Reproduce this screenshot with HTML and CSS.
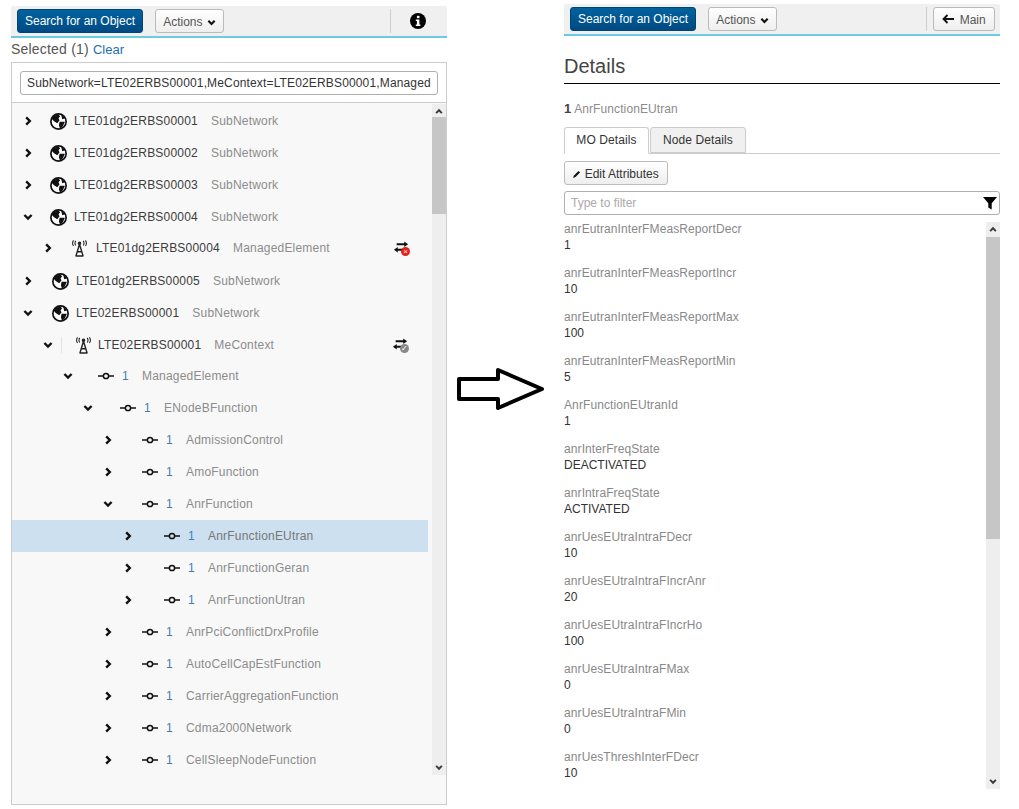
FILE: index.html
```html
<!DOCTYPE html>
<html lang="en">
<head>
    <meta charset="UTF-8">
    <title>Topology Browser</title>
    <link rel="stylesheet" href="styles.css">
</head>
<body>
    <svg class="sprites" width="0" height="0">
        <symbol id="globe" viewBox="0 0 16 16">
            <circle cx="8" cy="8" r="7.2" fill="#fff" stroke="#111" stroke-width="1.6"/>
            <path fill="#111" d="M3 3 7.5 1 9.5 3 8 5.2 9 6.8 6.8 9.6 3.5 7.5 1.5 5.5ZM9 8.2 14 8.2 12 12.8 9.5 15 8.4 11.5ZM10.5 1.5 14.5 5 11.5 5.8Z"/>
        </symbol>
        <symbol id="tower" viewBox="0 0 16 16" fill="none" stroke="#222">
            <circle cx="8" cy="3" r="1.2" fill="#222"/>
            <path stroke-width="1.3" d="M8 4 4.5 15.5M8 4 11.5 15.5M6 11H10M5 15H11"/>
            <path d="M4.5 .8Q3 3 4.5 5.2M11.5 .8Q13 3 11.5 5.2M2.4 .4Q.6 3 2.4 5.6M13.6 .4Q15.4 3 13.6 5.6"/>
        </symbol>
        <symbol id="node" viewBox="0 0 16 8" fill="none" stroke="#111" stroke-width="1.5">
            <circle cx="8" cy="4" r="2.6"/>
            <path d="M0 4H5.4M10.6 4H16"/>
        </symbol>
        <symbol id="right" viewBox="0 0 8 10">
            <path d="M2.2 1.4 5.8 5 2.2 8.6" fill="none" stroke="#111" stroke-width="2.4"/>
        </symbol>
        <symbol id="down" viewBox="0 0 10 8">
            <path d="M1.4 2 5 5.6 8.6 2" fill="none" stroke="#111" stroke-width="2.4"/>
        </symbol>
        <symbol id="sync" viewBox="0 0 14 11">
            <path fill="#111" d="M3 2H10V.5L13.5 3 10 5.5V4H3ZM10.5 7H4V5.5L.5 8 4 10.5V9H10.5Z"/>
        </symbol>
    </svg>

    <div class="page">
        <section class="pane">
            <div class="toolbar">
                <button class="btn primary">Search for an Object</button>
                <button class="btn actions">Actions <svg class="caret"><use href="#down"/></svg></button>
                <span class="toolbar-sep sep-info"></span>
                <svg class="info-icon" viewBox="0 0 16 16">
                    <circle cx="8" cy="8" r="8" fill="#000"/>
                    <rect x="6.9" y="2.8" width="2.6" height="2.4" fill="#fff"/>
                    <path fill="#fff" d="M5.8 6.4H9.4V11.4H10.4V13H5.8V11.4H6.9V8H5.8Z"/>
                </svg>
            </div>
            <div class="selected">Selected (1) <a class="clear">Clear</a></div>
            <div class="tree-box">
                <div class="path-bar">
                    <input class="path-input" value="SubNetwork=LTE02ERBS00001,MeContext=LTE02ERBS00001,ManagedElement=1,ENodeBFunction=1">
                </div>
                <div class="tree-wrap">
                    <div class="tree">
                        <div class="row top"><svg class="chev"><use href="#right"/></svg><svg class="ico globe"><use href="#globe"/></svg><span class="name">LTE01dg2ERBS00001</span><span class="type">SubNetwork</span></div>
                        <div class="row top"><svg class="chev"><use href="#right"/></svg><svg class="ico globe"><use href="#globe"/></svg><span class="name">LTE01dg2ERBS00002</span><span class="type">SubNetwork</span></div>
                        <div class="row top"><svg class="chev"><use href="#right"/></svg><svg class="ico globe"><use href="#globe"/></svg><span class="name">LTE01dg2ERBS00003</span><span class="type">SubNetwork</span></div>
                        <div class="row top"><svg class="chev"><use href="#down"/></svg><svg class="ico globe"><use href="#globe"/></svg><span class="name">LTE01dg2ERBS00004</span><span class="type">SubNetwork</span></div>
                        <div class="row lvl-1"><svg class="chev"><use href="#right"/></svg><svg class="ico tower"><use href="#tower"/></svg><span class="name">LTE01dg2ERBS00004</span><span class="type">ManagedElement</span>
                            <span class="sync"><svg class="sync-arrows"><use href="#sync"/></svg><span class="dot dot-red">×</span></span></div>
                        <div class="row top wide"><svg class="chev"><use href="#right"/></svg><svg class="ico globe"><use href="#globe"/></svg><span class="name">LTE01dg2ERBS00005</span><span class="type">SubNetwork</span></div>
                        <div class="row top wide"><svg class="chev"><use href="#down"/></svg><svg class="ico globe"><use href="#globe"/></svg><span class="name">LTE02ERBS00001</span><span class="type">SubNetwork</span></div>
                        <div class="row top lvl-1 wide"><svg class="chev"><use href="#down"/></svg><span class="tick"></span><svg class="ico tower"><use href="#tower"/></svg><span class="name">LTE02ERBS00001</span><span class="type">MeContext</span>
                            <span class="sync"><svg class="sync-arrows"><use href="#sync"/></svg><span class="dot dot-grey">✓</span></span></div>
                        <div class="row mo lvl-2"><svg class="chev"><use href="#down"/></svg><svg class="ico conn"><use href="#node"/></svg><span class="num">1</span><span class="type">ManagedElement</span></div>
                        <div class="row mo lvl-3"><svg class="chev"><use href="#down"/></svg><svg class="ico conn"><use href="#node"/></svg><span class="num">1</span><span class="type">ENodeBFunction</span></div>
                        <div class="row mo lvl-4"><svg class="chev"><use href="#right"/></svg><svg class="ico conn"><use href="#node"/></svg><span class="num">1</span><span class="type">AdmissionControl</span></div>
                        <div class="row mo lvl-4"><svg class="chev"><use href="#right"/></svg><svg class="ico conn"><use href="#node"/></svg><span class="num">1</span><span class="type">AmoFunction</span></div>
                        <div class="row mo lvl-4"><svg class="chev"><use href="#down"/></svg><svg class="ico conn"><use href="#node"/></svg><span class="num">1</span><span class="type">AnrFunction</span></div>
                        <div class="row mo lvl-5 active"><svg class="chev"><use href="#right"/></svg><svg class="ico conn"><use href="#node"/></svg><span class="num">1</span><span class="type">AnrFunctionEUtran</span></div>
                        <div class="row mo lvl-5"><svg class="chev"><use href="#right"/></svg><svg class="ico conn"><use href="#node"/></svg><span class="num">1</span><span class="type">AnrFunctionGeran</span></div>
                        <div class="row mo lvl-5"><svg class="chev"><use href="#right"/></svg><svg class="ico conn"><use href="#node"/></svg><span class="num">1</span><span class="type">AnrFunctionUtran</span></div>
                        <div class="row mo lvl-4"><svg class="chev"><use href="#right"/></svg><svg class="ico conn"><use href="#node"/></svg><span class="num">1</span><span class="type">AnrPciConflictDrxProfile</span></div>
                        <div class="row mo lvl-4"><svg class="chev"><use href="#right"/></svg><svg class="ico conn"><use href="#node"/></svg><span class="num">1</span><span class="type">AutoCellCapEstFunction</span></div>
                        <div class="row mo lvl-4"><svg class="chev"><use href="#right"/></svg><svg class="ico conn"><use href="#node"/></svg><span class="num">1</span><span class="type">CarrierAggregationFunction</span></div>
                        <div class="row mo lvl-4"><svg class="chev"><use href="#right"/></svg><svg class="ico conn"><use href="#node"/></svg><span class="num">1</span><span class="type">Cdma2000Network</span></div>
                        <div class="row mo lvl-4"><svg class="chev"><use href="#right"/></svg><svg class="ico conn"><use href="#node"/></svg><span class="num">1</span><span class="type">CellSleepNodeFunction</span></div>
                    </div>
                    <div class="scrollbar tree-scroll">
                        <svg class="sb-up"><use href="#down"/></svg>
                        <div class="thumb tree-thumb"></div>
                        <svg class="sb-down"><use href="#down"/></svg>
                    </div>
                </div>
            </div>
        </section>

        <svg class="big-arrow" viewBox="0 0 88 42">
            <path d="M2 11H41V2L85 21 41 40V31H2Z" fill="#fff" stroke="#000" stroke-width="4" stroke-linejoin="round"/>
        </svg>

        <section class="pane details-pane">
            <div class="toolbar">
                <button class="btn primary">Search for an Object</button>
                <button class="btn actions">Actions <svg class="caret"><use href="#down"/></svg></button>
                <span class="toolbar-sep sep-main"></span>
                <button class="btn main-btn">
                    <svg class="back" viewBox="0 0 12 10"><path d="M5.5 1 1.5 5 5.5 9M2 5H12" fill="none" stroke="#111" stroke-width="1.8"/></svg>
                    Main
                </button>
            </div>
            <h1 class="title">Details</h1>
            <div class="subject"><span class="count">1</span> <span class="type">AnrFunctionEUtran</span></div>
            <div class="tabs">
                <div class="tab on">MO Details</div>
                <div class="tab">Node Details</div>
            </div>
            <button class="btn edit-btn">
                <svg class="pencil" viewBox="0 0 8 8"><path d="M0 8 1 5.5 5.5 1 7 2.5 2.5 7Z" fill="#111"/></svg>
                Edit Attributes
            </button>
            <div class="filter">
                <span class="placeholder">Type to filter</span>
                <svg class="funnel" viewBox="0 0 14 14"><path d="M0 1H14L8.7 7.2V13.5L5.3 11.5V7.2Z" fill="#000"/></svg>
            </div>
            <div class="attrs-wrap">
                <dl class="attrs">
                    <dt>anrEutranInterFMeasReportDecr</dt><dd>1</dd>
                    <dt>anrEutranInterFMeasReportIncr</dt><dd>10</dd>
                    <dt>anrEutranInterFMeasReportMax</dt><dd>100</dd>
                    <dt>anrEutranInterFMeasReportMin</dt><dd>5</dd>
                    <dt>AnrFunctionEUtranId</dt><dd>1</dd>
                    <dt>anrInterFreqState</dt><dd>DEACTIVATED</dd>
                    <dt>anrIntraFreqState</dt><dd>ACTIVATED</dd>
                    <dt>anrUesEUtraIntraFDecr</dt><dd>10</dd>
                    <dt>anrUesEUtraIntraFIncrAnr</dt><dd>20</dd>
                    <dt>anrUesEUtraIntraFIncrHo</dt><dd>100</dd>
                    <dt>anrUesEUtraIntraFMax</dt><dd>0</dd>
                    <dt>anrUesEUtraIntraFMin</dt><dd>0</dd>
                    <dt>anrUesThreshInterFDecr</dt><dd>10</dd>
                </dl>
                <div class="scrollbar attrs-scroll">
                    <svg class="sb-up"><use href="#down"/></svg>
                    <div class="thumb attrs-thumb"></div>
                    <svg class="sb-down"><use href="#down"/></svg>
                </div>
            </div>
        </section>
    </div>
</body>
</html>
```

FILE: styles.css
```css
html, body {
    margin: 0;
    height: 809px;
    overflow: hidden;
    background-color: #fff;
}

body {
    font-family: "Liberation Sans", Arial, sans-serif;
    font-size: 12px;
    color: #333;
}

.sprites {
    display: block;
    height: 0;
}

.page {
    display: flex;
    align-items: flex-start;
    padding-left: 11px;
}

.pane {
    width: 436px;
    margin-top: 6px;
    flex: none;
}

.details-pane {
    margin-top: 4px;
    margin-left: 19px;
}

.big-arrow {
    width: 88px;
    height: 42px;
    margin: 368px 0 0 10px;
    flex: none;
}

/* toolbar */
.toolbar {
    display: flex;
    align-items: center;
    height: 30px;
    padding-left: 6px;
    background-color: #f0f0f0;
    border-bottom: 2px solid #6ccbe4;
    border-radius: 2px 2px 0 0;
}

.btn {
    height: 24px;
    padding: 0;
    border: 1px solid #bbb;
    border-radius: 3px;
    background: linear-gradient(#fff, #eee);
    font-family: inherit;
    font-size: 12px;
    color: #555;
    cursor: pointer;
}

.primary {
    width: 126px;
    border-color: #00457a;
    background: linear-gradient(#00629f, #004a82);
    color: #fff;
}

.actions {
    width: 69px;
    margin-left: 12px;
    padding-top: 2px;
}

.caret {
    width: 9px;
    height: 7px;
    margin-left: 1px;
}

.toolbar-sep {
    width: 1px;
    height: 24px;
    background-color: #ccc;
}

.sep-info {
    margin-left: 166px;
}

.sep-main {
    margin-left: 149px;
}

.info-icon {
    width: 16px;
    height: 16px;
    margin-left: 19px;
}

.main-btn {
    width: 62px;
    margin-left: 6px;
    padding-top: 2px;
}

.back {
    width: 12px;
    height: 10px;
    margin-right: 2px;
}

/* left pane */
.selected {
    height: 24px;
    line-height: 22px;
    font-size: 14px;
    letter-spacing: .2px;
    color: #555;
}

.clear {
    font-size: 13px;
    letter-spacing: 0;
    color: #1d6fb0;
}

.tree-box {
    border: 1px solid #ccc;
    height: 741px;
    background-color: #f8f8f8;
}

.path-bar {
    height: 40px;
    padding: 8px;
    box-sizing: border-box;
    background-color: #fff;
    border-bottom: 1px solid #ccc;
}

.path-input {
    width: 100%;
    height: 24px;
    box-sizing: border-box;
    padding: 0 6px;
    border: 1px solid #b0b0b0;
    border-radius: 3px;
    font-family: inherit;
    font-size: 12px;
    letter-spacing: .15px;
    color: #333;
}

.tree-wrap {
    display: flex;
    justify-content: space-between;
}

.tree {
    width: 416px;
    margin-top: 1px;
}

.row {
    display: flex;
    align-items: center;
    height: 32px;
    padding-left: 11px;
    font-size: 12px;
    letter-spacing: .2px;
}

/* the upper rows sit a pixel lower in their 32px slot */
.top {
    box-sizing: border-box;
    padding-top: 2px;
}

.chev {
    width: 10px;
    height: 10px;
    flex: none;
}

.ico {
    flex: none;
}

.tick {
    width: 1px;
    height: 16px;
    margin: 0 -1px 0 8px;
    background-color: #e2e2e2;
    flex: none;
}

.globe {
    width: 17px;
    height: 17px;
    margin: 0 7px 0 17px;
}

.wide .globe {
    margin-left: 19px;
}

.tower {
    width: 17px;
    height: 17px;
    margin: 0 8px 0 18px;
}

.wide .tower {
    margin: 0 6px 0 14px;
}

.conn {
    width: 16px;
    height: 8px;
    margin-right: 8px;
}

.lvl-1 { padding-left: 31px; }
.lvl-2 { padding-left: 51px; }
.lvl-3 { padding-left: 71px; }
.lvl-4 { padding-left: 91px; }
.lvl-5 { padding-left: 111px; }

.lvl-2 .conn { margin-left: 25px; }
.lvl-3 .conn { margin-left: 27px; }
.lvl-4 .conn { margin-left: 29px; }
.lvl-5 .conn { margin-left: 31px; }

.name {
    color: #3c3c3c;
}

.type {
    color: #8c8c8c;
}

.row .name {
    margin-right: 13px;
}

.num {
    width: 20px;
    color: #3d7fb8;
    flex: none;
}

.active {
    background-color: #cce0ef;
}

.active .type {
    color: #777;
}

/* connection state */
.sync {
    position: relative;
    flex: none;
    width: 18px;
    height: 14px;
    margin-left: auto;
    margin-right: 17px;
}

.wide .sync {
    margin-right: 18px;
}

.sync-arrows {
    position: absolute;
    left: 0;
    top: 0;
    width: 16px;
    height: 12px;
}

.dot {
    position: absolute;
    left: 8px;
    top: 6px;
    width: 9px;
    height: 9px;
    border-radius: 50%;
    color: #fff;
    font-size: 8px;
    line-height: 9px;
    letter-spacing: 0;
    text-align: center;
}

.dot-red {
    background-color: #e32119;
}

.dot-grey {
    background-color: #888;
}

/* scrollbars */
.scrollbar {
    position: relative;
    width: 14px;
    background-color: #eee;
    flex: none;
}

.scrollbar svg {
    position: absolute;
    left: 3px;
    width: 8px;
    height: 7px;
    opacity: .8;
}

.sb-up {
    top: 4px;
    transform: scaleY(-1);
}

.sb-down {
    bottom: 4px;
}

.thumb {
    position: absolute;
    left: 0;
    width: 14px;
    background-color: #c6c6c6;
}

.tree-scroll {
    height: 671px;
    margin: 1px 0 0;
}

.tree-thumb {
    top: 13px;
    height: 97px;
}

.attrs-scroll {
    height: 567px;
}

.attrs-thumb {
    top: 15px;
    height: 302px;
}

/* right pane */
.title {
    margin: 0;
    height: 47px;
    line-height: 61px;
    font-size: 20px;
    font-weight: normal;
    color: #444;
    border-bottom: 1px solid #000;
}

.subject {
    height: 43px;
    line-height: 49px;
    letter-spacing: .1px;
    color: #333;
}

.count {
    font-size: 13px;
    font-weight: bold;
    color: #444;
}

.tabs {
    display: flex;
    height: 27px;
    box-sizing: border-box;
    border-bottom: 1px solid #ccc;
}

.tab {
    height: 26px;
    line-height: 24px;
    box-sizing: border-box;
    padding: 0 12px;
    margin-right: 1px;
    border: 1px solid #ccc;
    border-radius: 3px 3px 0 0;
    background-color: #f0f0f0;
    letter-spacing: .1px;
    color: #333;
}

.tab.on {
    width: 85px;
    height: 27px;
    padding: 0;
    text-align: center;
    background-color: #fff;
    border-bottom-color: #fff;
}

.edit-btn {
    display: block;
    width: 104px;
    margin-top: 7px;
    padding-top: 1px;
    color: #333;
}

.pencil {
    width: 8px;
    height: 8px;
}

.filter {
    display: flex;
    align-items: center;
    justify-content: space-between;
    height: 24px;
    box-sizing: border-box;
    margin-top: 6px;
    padding: 0 2px 0 6px;
    border: 1px solid #b0b0b0;
    border-radius: 3px;
}

.placeholder {
    color: #aaa;
}

.funnel {
    width: 14px;
    height: 14px;
}

.attrs-wrap {
    display: flex;
    justify-content: space-between;
    margin-top: 7px;
}

.attrs {
    margin: 0;
    height: 567px;
    overflow: hidden;
}

.attrs dt {
    height: 16px;
    line-height: 14px;
    letter-spacing: .1px;
    color: #888;
}

.attrs dd {
    margin: 0 0 12px;
    height: 16px;
    line-height: 14px;
    color: #333;
}
```
